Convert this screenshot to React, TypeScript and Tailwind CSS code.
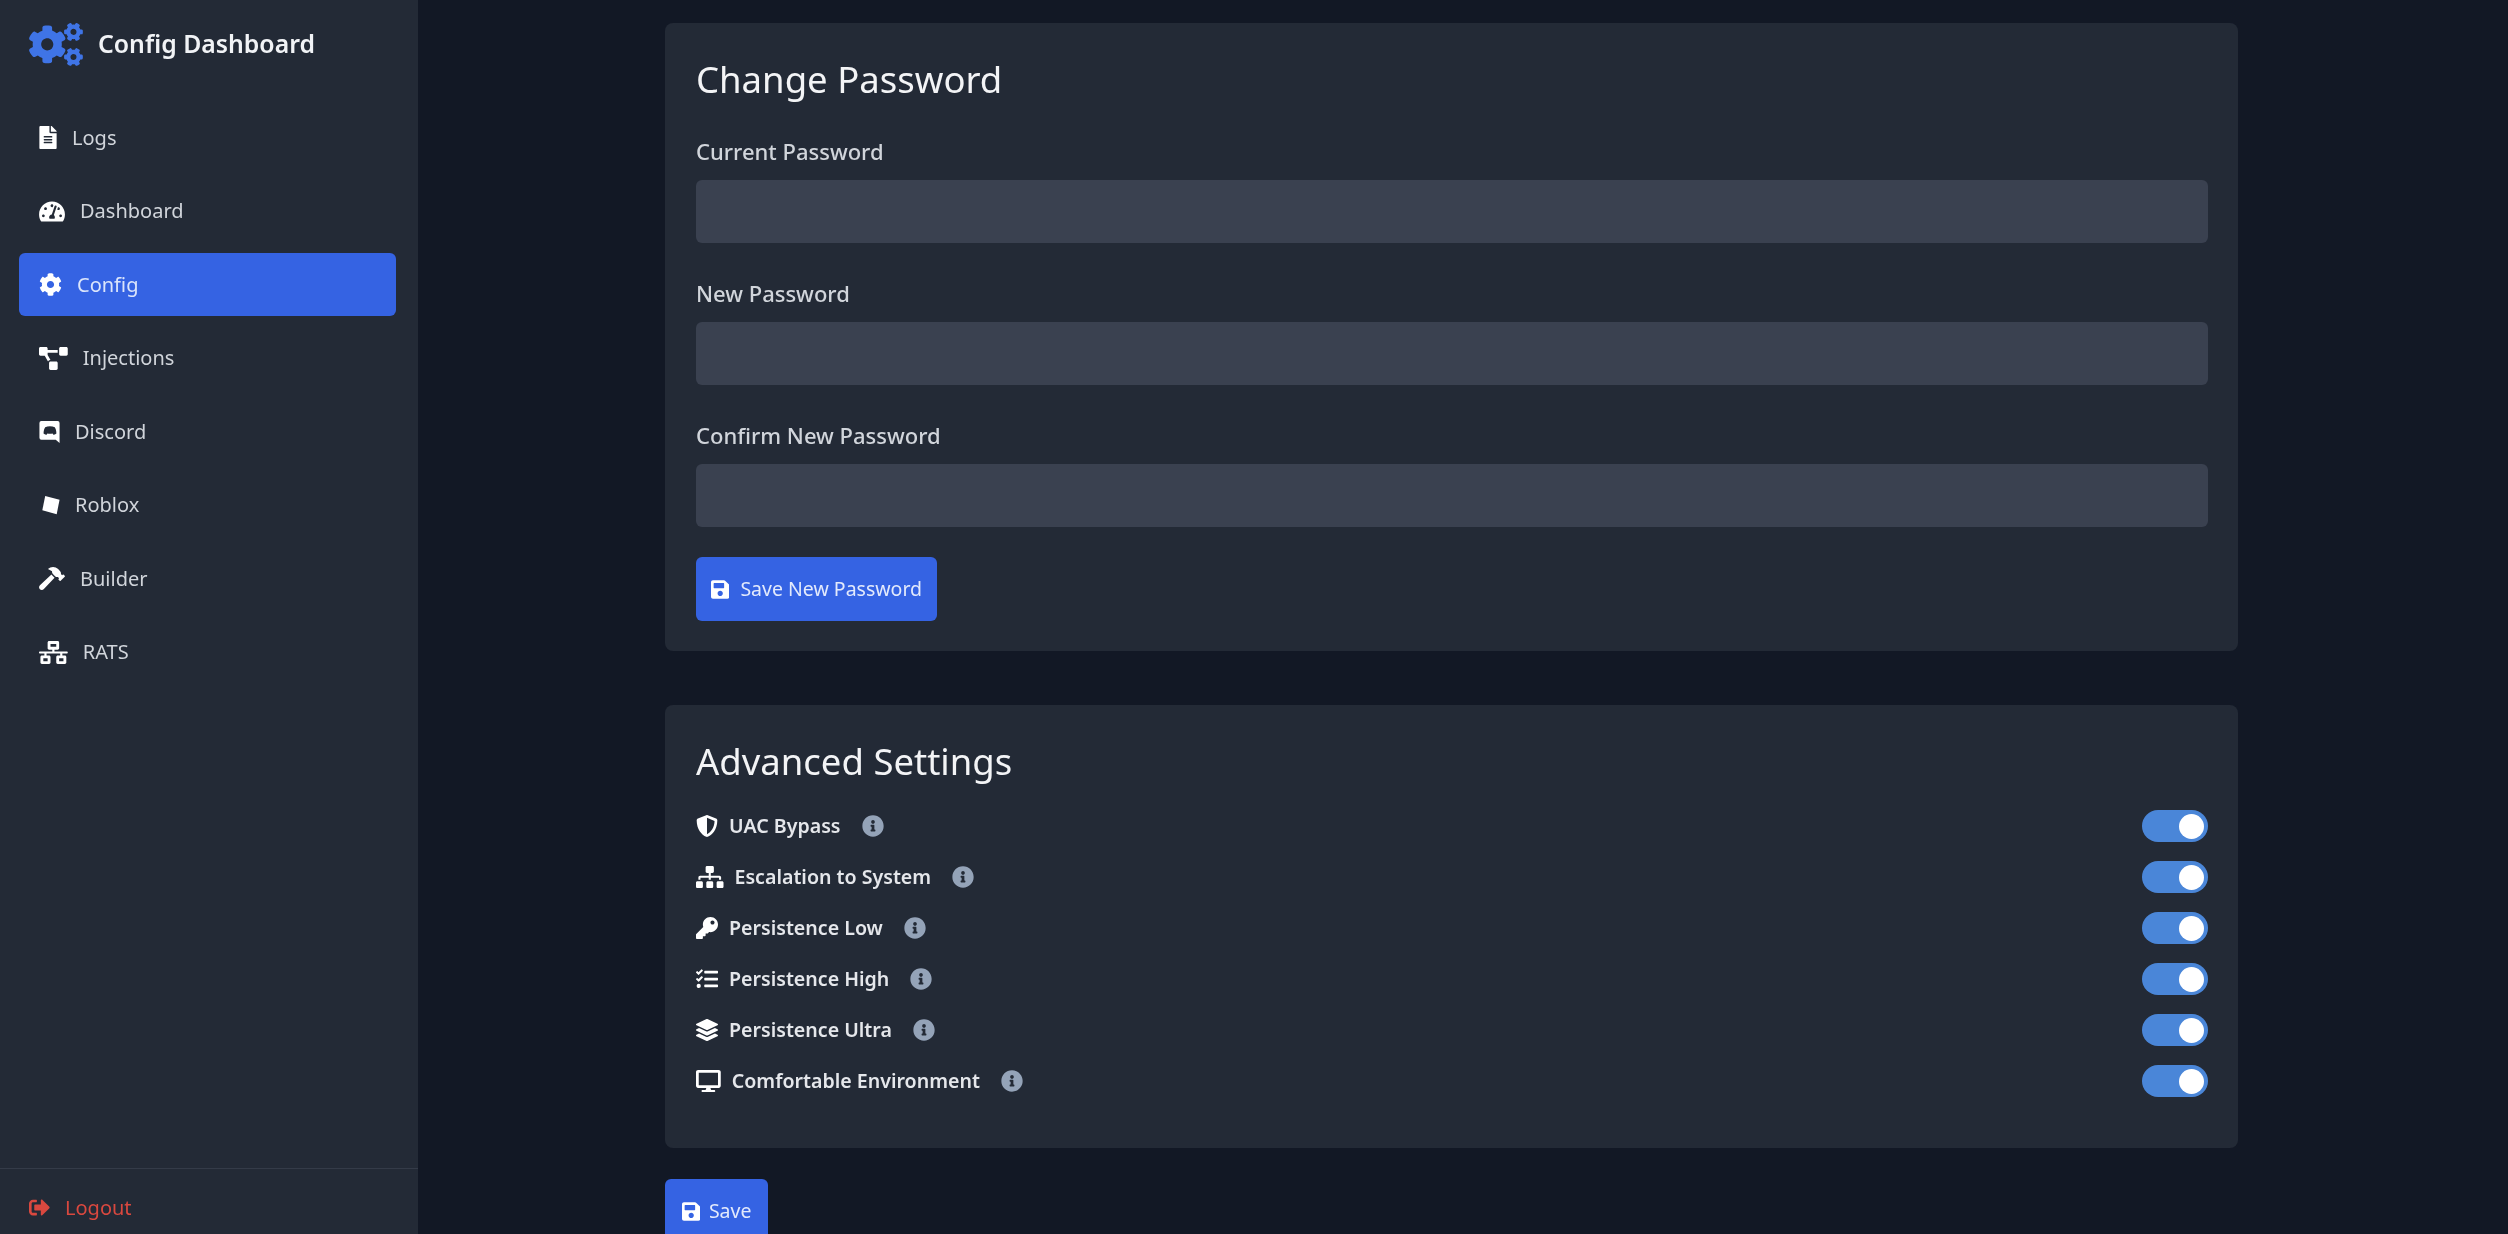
import type { ComponentType } from "react";
import {
  FaCogs,
  FaCog,
  FaDesktop,
  FaFileAlt,
  FaHammer,
  FaInfoCircle,
  FaKey,
  FaLayerGroup,
  FaNetworkWired,
  FaProjectDiagram,
  FaSave,
  FaShieldAlt,
  FaSignOutAlt,
  FaSitemap,
  FaTachometerAlt,
  FaTasks,
} from "react-icons/fa";

type Icon = ComponentType<{ className?: string }>;

// old square discord bubble, the icon package only has the newer logo
const DiscordIcon: Icon = ({ className }) => (
  <svg viewBox="0 0 21 24" className={className} fill="currentColor">
    <path
      fillRule="evenodd"
      d="M2 1h17a2 2 0 0 1 2 2v21l-4-3.500H2a2 2 0 0 1-2-2V3a2 2 0 0 1 2-2zM6 7.500c-1 1.500-1.600 3.600-1.700 6.500 1 .8 2.200 1.200 3.200 1.300l.8-1.200c1.800.5 3.600.5 5.400 0l.8 1.200c1-.1 2.200-.5 3.200-1.300-.1-2.900-.7-5-1.700-6.500-2.800-1.200-7.200-1.200-10 0z"
    />
  </svg>
);

const RobloxIcon: Icon = ({ className }) => (
  <svg viewBox="0 0 21 24" className={className} fill="currentColor">
    <polygon points="6,2 21,6 18,21 3,17" />
  </svg>
);

const navItems: { label: string; icon: Icon; width: string; active?: boolean }[] = [
  { label: "Logs", icon: FaFileAlt, width: "w-[18px]" },
  { label: "Dashboard", icon: FaTachometerAlt, width: "w-[26px]" },
  { label: "Config", icon: FaCog, width: "w-[23px]", active: true },
  { label: "Injections", icon: FaProjectDiagram, width: "w-[28.750px]" },
  { label: "Discord", icon: DiscordIcon, width: "w-[21px]" },
  { label: "Roblox", icon: RobloxIcon, width: "w-[21px]" },
  { label: "Builder", icon: FaHammer, width: "w-[26px]" },
  { label: "RATS", icon: FaNetworkWired, width: "w-[28.750px]" },
];

const settings: { label: string; icon: Icon; width: string }[] = [
  { label: "UAC Bypass", icon: FaShieldAlt, width: "w-[22px]" },
  { label: "Escalation to System", icon: FaSitemap, width: "w-[27.500px]" },
  { label: "Persistence Low", icon: FaKey, width: "w-[22px]" },
  { label: "Persistence High", icon: FaTasks, width: "w-[22px]" },
  { label: "Persistence Ultra", icon: FaLayerGroup, width: "w-[22px]" },
  { label: "Comfortable Environment", icon: FaDesktop, width: "w-[24.750px]" },
];

const passwordFields = ["Current Password", "New Password", "Confirm New Password"];

const App = () => {
  return (
    <div className="flex h-screen overflow-hidden bg-[#121825] font-['Noto_Sans',sans-serif] text-white blur-[0.5px]">
      {/* Sidebar */}
      <aside className="flex w-[418px] shrink-0 flex-col bg-[#232a36]">
        <div className="flex h-[88px] items-center gap-[15px] pl-[29px]">
          <FaCogs className="h-[43px] w-[54px] shrink-0 text-[#3f74e6]" />
          <span className="text-[24.800px] font-semibold text-[#f1f3f6]">Config Dashboard</span>
        </div>

        <nav className="mt-[18px] flex flex-1 flex-col gap-[10.500px] pr-[22px] pl-[19px]">
          {navItems.map((item) => (
            <a
              key={item.label}
              href="#"
              className={`flex h-[63px] items-center gap-[15px] rounded-md px-[20px] text-[20px] ${
                item.active ? "bg-[#3563e3] text-[#dbe5fb]" : "text-[#d1d5db]"
              }`}
            >
              <item.icon className={`h-[23px] shrink-0 text-white ${item.width}`} />
              <span>{item.label}</span>
            </a>
          ))}
        </nav>

        <div className="flex h-[66px] items-center gap-[15px] border-t border-[#343b48] pt-[12px] pl-[29px] text-[20px] text-[#d9483f]">
          <FaSignOutAlt className="h-[21px] w-[21px] shrink-0" />
          <span>Logout</span>
        </div>
      </aside>

      {/* Main */}
      <main className="flex-1 pt-[23px] pl-[247px]">
        <div className="flex w-[1573px] flex-col">
          <section className="rounded-lg bg-[#232a36] pt-[32px] pr-[30px] pb-[30px] pl-[31px]">
            <h2 className="text-[36.500px] leading-[48px] text-[#f3f4f6]">Change Password</h2>
            <div className="mt-[33px] flex flex-col gap-[35px]">
              {passwordFields.map((field) => (
                <div key={field}>
                  <label className="block text-[22px] leading-[30px] font-medium text-[#d1d5db]">{field}</label>
                  <input
                    type="password"
                    className="mt-[14px] block h-[63px] w-full rounded-md bg-[#3a4150] px-[16px] outline-none"
                  />
                </div>
              ))}
            </div>
            <button className="mt-[30px] flex h-[64px] items-center gap-[11px] rounded-md bg-[#3563e3] px-[15px] text-[19.500px] text-[#e3eafc]">
              <FaSave className="h-[21px] w-[18.400px] shrink-0 text-white" />
              Save New Password
            </button>
          </section>

          <section className="mt-[54px] h-[443px] rounded-lg bg-[#232a36] pt-[32px] pr-[30px] pl-[31px]">
            <h2 className="text-[36.500px] leading-[48px] text-[#f3f4f6]">Advanced Settings</h2>
            <div className="mt-[25px] flex flex-col gap-[19px]">
              {settings.map((setting) => (
                <div key={setting.label} className="flex h-[32px] items-center justify-between">
                  <div className="flex items-center gap-[11px]">
                    <setting.icon className={`h-[22px] shrink-0 text-white ${setting.width}`} />
                    <span className="text-[19.600px] font-semibold text-[#e5e7eb]">{setting.label}</span>
                    <FaInfoCircle className="ml-[10px] h-[22px] w-[22px] shrink-0 text-[#94a3b8]" />
                  </div>
                  <div className="flex h-[32px] w-[66px] items-center justify-end rounded-full bg-[#4a86d8] pr-[4px]">
                    <div className="h-[25px] w-[25px] rounded-full bg-white" />
                  </div>
                </div>
              ))}
            </div>
          </section>

          <button className="mt-[31px] flex h-[64px] w-[103px] shrink-0 items-center justify-center gap-[9px] rounded-md bg-[#3563e3] text-[19.500px] text-[#e3eafc]">
            <FaSave className="h-[21px] w-[18.400px] shrink-0 text-white" />
            Save
          </button>
        </div>
      </main>
    </div>
  );
};

export default App;
